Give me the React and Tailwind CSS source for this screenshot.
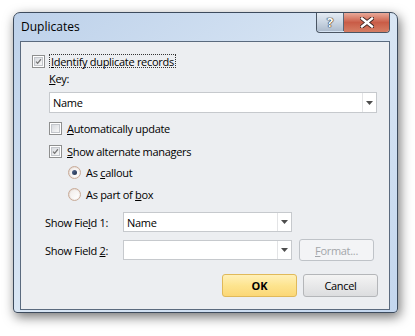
import React from "react";

function Check({ checked }) {
  return (
    <div className="w-[13px] h-[13px] shrink-0 border border-[#8e8f8f] bg-white p-[1px]">
      <div className="w-full h-full border border-[#c3c6cb] bg-gradient-to-br from-[#d8dbe0] to-[#f7f7f7] flex items-center justify-center">
        {checked && (
          <svg width="9" height="9" viewBox="0 0 9 9">
            <path d="M1.3 4.6 L3.4 6.8 L7.6 1.6" fill="none" stroke="#767676" strokeWidth="1.6" />
          </svg>
        )}
      </div>
    </div>
  );
}

function Radio({ checked }) {
  return (
    <div className="w-[13px] h-[13px] shrink-0 rounded-full border border-[#c9ab98] bg-gradient-to-br from-[#e2d6cf] to-[#fbf9f8] flex items-center justify-center">
      <div className="w-[9px] h-[9px] rounded-full bg-gradient-to-br from-[#f1ece9] to-[#ffffff] flex items-center justify-center">
        {checked && <div className="w-[5px] h-[5px] rounded-full bg-gradient-to-br from-[#5a6f96] to-[#1c2d4a]" />}
      </div>
    </div>
  );
}

function Arrow() {
  return (
    <svg width="7" height="4" viewBox="0 0 7 4">
      <path d="M0 0 H7 L3.5 4 Z" fill="#4d4d4d" />
    </svg>
  );
}

function Combo({ value, width }) {
  return (
    <div className={`flex h-full ${width} border border-[#c6c9cd] bg-white`}>
      <div className="flex-1 flex items-center pl-[3px] text-black">{value}</div>
      <div className="w-[14px] border-l border-[#e3e4e6] flex items-center justify-center">
        <Arrow />
      </div>
    </div>
  );
}

export default function App() {
  return (
    <div className="w-[415px] h-[336px] bg-white pt-[12px] pl-[13px] font-['Open_Sans','Noto_Sans',sans-serif] text-[11px] tracking-[-0.3px] text-black leading-none">
      <div className="w-[385px] h-[301px] rounded-t-[7px] rounded-b-[4px] border border-[#3d4b5d] bg-gradient-to-br from-[#bdd1ea] via-[#d9e6f4] to-[#c3d6ee] shadow-[2px_4px_12px_rgba(0,0,0,0.55)] flex flex-col">
        <div className="h-[28px] flex items-start shrink-0">
          <div className="pl-[7px] pt-[8px] text-[12px] tracking-normal text-black">Duplicates</div>
          <div className="ml-auto mr-[7px] flex rounded-b-[4px] border border-t-0 border-[#4a5563] overflow-hidden">
            <div className="w-[27px] h-[18px] bg-gradient-to-b from-[#e4ebf3] via-[#cbd6e3] to-[#aebccd] border-r border-[#5a6575] flex items-center justify-center">
              <span className="text-[13px] font-bold text-white [text-shadow:0_0_1px_#222,0_0_1px_#222,0_0_1px_#222]">?</span>
            </div>
            <div className="w-[45px] h-[19px] bg-gradient-to-b from-[#e8a999] via-[#c95c47] to-[#d57e64] flex items-center justify-center">
              <svg width="14" height="11" viewBox="0 0 14 11">
                <path d="M2 1.5 L12 9.5 M12 1.5 L2 9.5" stroke="#3b2320" strokeWidth="4.2" strokeLinecap="square" />
                <path d="M2 1.5 L12 9.5 M12 1.5 L2 9.5" stroke="#ffffff" strokeWidth="2.4" strokeLinecap="square" />
              </svg>
            </div>
          </div>
        </div>
        <div className="ml-[6px] w-[370px] h-[269px] border border-[#5a6a7e] bg-[#eceef1] flex flex-col pl-[11px] pr-[11px]">
          <div className="mt-[12px] h-[14px] flex items-center">
            <Check checked />
            <div className="ml-[4px] h-[14px] border border-dotted border-[#333] flex items-center px-[1px]">
              <span><span className="underline">I</span>dentify duplicate records</span>
            </div>
          </div>
          <div className="mt-[2px] h-[16px] flex items-center pl-[17px]">
            <span><span className="underline">K</span>ey:</span>
          </div>
          <div className="mt-[6px] h-[21px] pl-[17px] flex">
            <Combo value="Name" width="w-[328px]" />
          </div>
          <div className="mt-[9px] h-[13px] flex items-center pl-[17px] gap-[5px]">
            <Check />
            <span><span className="underline">A</span>utomatically update</span>
          </div>
          <div className="mt-[10px] h-[13px] flex items-center pl-[17px] gap-[5px]">
            <Check checked />
            <span><span className="underline">S</span>how alternate managers</span>
          </div>
          <div className="mt-[8px] h-[13px] flex items-center pl-[36px] gap-[5px]">
            <Radio checked />
            <span>As <span className="underline">c</span>allout</span>
          </div>
          <div className="mt-[9px] h-[13px] flex items-center pl-[36px] gap-[5px]">
            <Radio />
            <span>As part of <span className="underline">b</span>ox</span>
          </div>
          <div className="mt-[11px] h-[20px] flex items-center pl-[13px]">
            <span className="w-[78px]">Show Fie<span className="underline">l</span>d 1:</span>
            <Combo value="Name" width="w-[169px]" />
          </div>
          <div className="mt-[7px] h-[22px] flex items-center pl-[13px]">
            <span className="w-[78px]">Show Field <span className="underline">2</span>:</span>
            <div className="h-[20px] flex">
              <Combo value="" width="w-[169px]" />
            </div>
            <div className="ml-[7px] w-[75px] h-[22px] rounded-[3px] border border-[#bfc3c8] bg-[#f3f4f6] flex items-center justify-center text-[#a3a6aa]">
              <span><span className="underline">F</span>ormat...</span>
            </div>
          </div>
          <div className="mt-[13px] h-[23px] flex justify-end gap-[6px]">
            <div className="w-[75px] h-[23px] rounded-[3px] border border-[#e0b95a] bg-gradient-to-b from-[#fff0b8] via-[#fde48f] to-[#fbd776] flex items-center justify-center font-bold tracking-normal">
              OK
            </div>
            <div className="w-[75px] h-[23px] rounded-[3px] border border-[#b4b6b9] bg-gradient-to-b from-[#f4f4f4] to-[#dcdddf] flex items-center justify-center">
              Cancel
            </div>
          </div>
        </div>
      </div>
    </div>
  );
}
